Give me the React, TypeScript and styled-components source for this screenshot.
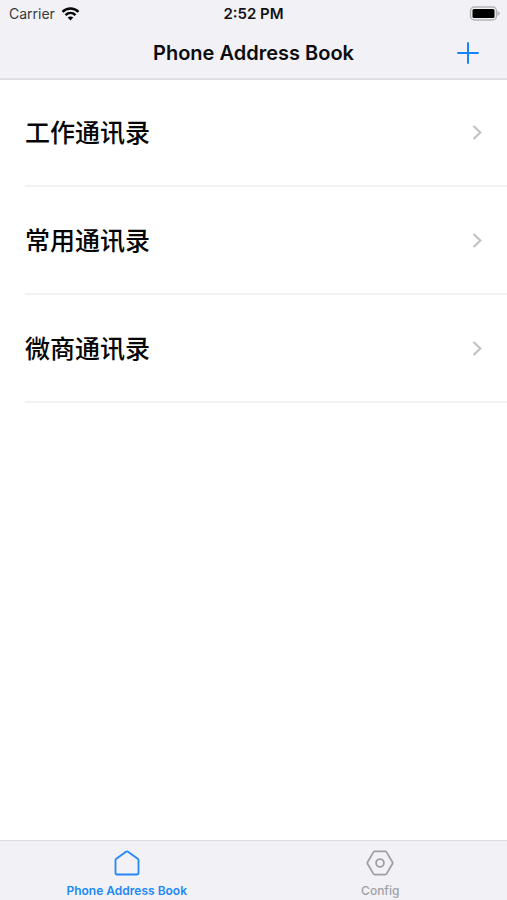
import React from "react";
import styled, { createGlobalStyle } from "styled-components";

const GlobalStyle = createGlobalStyle`
  * { box-sizing: border-box; }
  body { margin: 0; background: #fff; font-family: Inter, "Noto Sans CJK SC", sans-serif; }
  svg { display: block; }
`;

const Screen = styled.div`
  min-height: 100vh;
  display: flex;
  flex-direction: column;
`;

const Header = styled.header`
  background: #f1f1f6;
  border-bottom: 1px solid #e2e2e6;
  box-shadow: 0 1px 0 #dededf;
`;

const StatusBar = styled.div`
  display: grid;
  grid-template-columns: 1fr auto 1fr;
  align-items: center;
  height: 27px;
  padding: 0 7px;
  color: #111114;
`;

const Carrier = styled.div`
  display: flex;
  align-items: center;
  gap: 6px;
  padding-left: 2px;
  font-size: 14px;
  color: #38383c;
`;

const Time = styled.time`
  font-size: 15px;
  font-weight: 600;
`;

const Battery = styled.svg`
  justify-self: end;
`;

const NavBar = styled.div`
  display: grid;
  grid-template-columns: 1fr auto 1fr;
  align-items: center;
  height: 51px;
  padding: 0 24px;
`;

const Title = styled.h1`
  grid-column: 2;
  margin: 0;
  font-size: 20px;
  line-height: 24px;
  font-weight: 600;
  color: #0c0c0e;
`;

const PlainButton = styled.button`
  border: 0;
  padding: 0;
  background: none;
  font-family: inherit;
  cursor: pointer;
`;

const AddButton = styled(PlainButton)`
  justify-self: end;
  padding: 4px;
  color: #1684fb;
`;

const List = styled.ul`
  flex: 1;
  margin: 0;
  padding: 0 0 0 25px;
  list-style: none;
`;

const Row = styled.li`
  border-bottom: 2px solid #f2f2f3;
`;

const RowButton = styled(PlainButton)`
  display: flex;
  align-items: center;
  justify-content: space-between;
  width: 100%;
  height: 106px;
  padding: 0 24px 0 0;
  text-align: left;
`;

const RowName = styled.span`
  padding-bottom: 2px;
  font-family: "Noto Sans CJK SC", sans-serif;
  font-size: 25px;
  font-weight: 500;
  color: #050505;
`;

const TabBar = styled.nav`
  display: grid;
  grid-template-columns: 1fr 1fr;
  height: 60px;
  background: #f1f1f6;
  border-top: 1px solid #dcdce0;
`;

const Tab = styled(PlainButton)<{ $active?: boolean }>`
  display: flex;
  flex-direction: column;
  align-items: center;
  gap: 6px;
  padding-top: 8px;
  font-size: 12px;
  line-height: 16px;
  font-weight: ${(p) => (p.$active ? 600 : 500)};
  color: ${(p) => (p.$active ? "#2288f7" : "#a0a0a4")};
`;

const books = ["工作通讯录", "常用通讯录", "微商通讯录"];

export default function App() {
  return (
    <Screen>
      <GlobalStyle />
      <Header>
        <StatusBar>
          <Carrier>
            Carrier
            <svg width="19" height="14" viewBox="0 0 18 14" aria-label="Wi-Fi" fill="none" stroke="#08080a" strokeWidth="2.5">
              <path d="M1 4.8C5.6.3 12.4.3 17 4.8" />
              <path d="M4 8.1c2.9-2.8 7.1-2.8 10 0" />
              <path d="M6.2 10.6c1.6-1.6 4-1.6 5.6 0L9 13.5Z" fill="#08080a" stroke="none" />
            </svg>
          </Carrier>
          <Time>2:52 PM</Time>
          <Battery width="31" height="16" viewBox="0 0 31 16" aria-label="Battery full">
            <rect x="1.5" y="1" width="26" height="13" rx="4" fill="#f1f1f6" stroke="#b4b4b8" strokeWidth="1.5" />
            <rect x="3.5" y="3" width="22" height="9" rx="1.5" fill="#000" />
            <path d="M28.5 5c3 1.700 3 3.300 0 5Z" fill="#b4b4b8" />
          </Battery>
        </StatusBar>
        <NavBar>
          <Title>Phone Address Book</Title>
          <AddButton aria-label="Add">
            <svg width="22" height="22" viewBox="0 0 22 22" stroke="currentColor" strokeWidth="2" strokeLinecap="round">
              <path d="M11 1v20M1 11h20" />
            </svg>
          </AddButton>
        </NavBar>
      </Header>
      <List>
        {books.map((name) => (
          <Row key={name}>
            <RowButton>
              <RowName>{name}</RowName>
              <svg width="12" height="16" viewBox="0 0 12 16" fill="none" stroke="#c2c2c5" strokeWidth="2.2" aria-hidden="true">
                <path d="M2.5 2 9.3 8.5 2.5 15" />
              </svg>
            </RowButton>
          </Row>
        ))}
      </List>
      <TabBar>
        <Tab $active aria-current="page">
          <svg width="28" height="28" viewBox="0 0 28 28" fill="none" stroke="currentColor" strokeWidth="1.8" strokeLinejoin="round" aria-hidden="true">
            <path d="M13 2.7q1-.7 2 0l9.7 7.1q.8.6.8 1.5v12.4q0 1.8-1.8 1.8H4.300q-1.800 0-1.800-1.800V11.300q0-.9.8-1.500Z" />
          </svg>
          Phone Address Book
        </Tab>
        <Tab>
          <svg width="28" height="28" viewBox="0 0 28 28" fill="none" stroke="currentColor" strokeWidth="1.8" strokeLinejoin="round" aria-hidden="true">
            <path d="M8.600 2.400h10.800q.7 0 1.100.7l6 10.200q.4.700 0 1.400l-6 10.200q-.4.700-1.100.700H8.600q-.7 0-1.100-.7l-6-10.200q-.4-.7 0-1.400l6-10.200q.4-.7 1.100-.7Z" />
            <circle cx="14" cy="14" r="3.900" />
          </svg>
          Config
        </Tab>
      </TabBar>
    </Screen>
  );
}
